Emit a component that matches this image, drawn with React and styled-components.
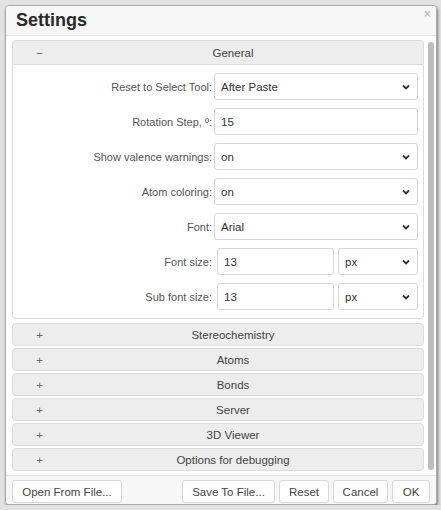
import React from "react";
import styled, { createGlobalStyle } from "styled-components";

const Global = createGlobalStyle`
  html, body {
    margin: 0;
    padding: 0;
    background: #e2e2e2;
    font-family: "Liberation Sans", Arial, sans-serif;
  }
`;

const Dialog = styled.div`
  box-sizing: border-box;
  margin: 5px 0 0 5px;
  width: 432px;
  height: 500px;
  background: #fff;
  border: 1px solid #a9a9a9;
  border-radius: 4px;
  box-shadow: 1px 2px 3px rgba(0, 0, 0, 0.45);
  display: flex;
  flex-direction: column;
  overflow: hidden;
`;

const TitleBar = styled.div`
  position: relative;
  height: 29px;
  flex: none;
  display: flex;
  align-items: center;
  padding-left: 10px;
  background: #f7f7f7;
  border-bottom: 1px solid #e3e3e3;
  font-size: 18px;
  font-weight: bold;
  color: #2a2a2a;
`;

const Close = styled.span`
  position: absolute;
  right: 5px;
  top: 1px;
  font-size: 12px;
  font-weight: bold;
  color: #c4c4c4;
`;

const Body = styled.div`
  flex: 1;
  display: flex;
  gap: 4px;
  padding: 4px 2px 0 6px;
  overflow: hidden;
`;

const Panels = styled.div`
  width: 412px;
  display: flex;
  flex-direction: column;
`;

const Scrollbar = styled.div`
  width: 6px;
  height: 428px;
  margin-top: 2px;
  border-radius: 3px;
  background: #bdbdbd;
`;

const Header = styled.div`
  box-sizing: border-box;
  height: ${(p) => (p.open ? 25 : 23)}px;
  margin-top: ${(p) => (p.open ? 0 : 2)}px;
  display: grid;
  grid-template-columns: 30px 1fr;
  align-items: center;
  background: #ededed;
  border: 1px solid #dcdcdc;
  border-radius: ${(p) => (p.open ? "4px 4px 0 0" : "4px")};
  font-size: 11.5px;
  color: #444;
`;

const Sign = styled.span`
  text-align: right;
  color: #666;
`;

const HeaderText = styled.span`
  text-align: center;
`;

const PanelBody = styled.div`
  box-sizing: border-box;
  height: 254px;
  margin-bottom: 2px;
  padding: 8px 5px 0 0;
  border: 1px solid #dcdcdc;
  border-top: none;
  border-radius: 0 0 4px 4px;
  display: flex;
  flex-direction: column;
  gap: 8px;
`;

const Row = styled.div`
  display: grid;
  grid-template-columns: 201px 1fr;
  align-items: center;
  height: 27px;
`;

const Label = styled.label`
  text-align: right;
  padding-right: 2px;
  font-size: 11px;
  color: #555;
`;

const Controls = styled.div`
  display: flex;
  gap: 4px;
  height: 100%;
`;

const Field = styled.div`
  position: relative;
  box-sizing: border-box;
  flex: ${(p) => p.flex || 1};
  height: 27px;
  margin-left: ${(p) => p.shift || 0}px;
  border: 1px solid #d6d6d6;
  border-radius: 3px;
  background: #fff;
  display: flex;
  align-items: center;
  padding-left: 6px;
  font-size: 11.5px;
  color: #333;
`;

const Chevron = styled.svg`
  position: absolute;
  right: 7px;
  top: 50%;
  margin-top: -3px;
  width: 8px;
  height: 6px;
`;

const Footer = styled.div`
  flex: none;
  height: 29px;
  display: flex;
  gap: 4px;
  padding: 4px 5px 0 6px;
  box-sizing: border-box;
  background: #f7f7f7;
  border-top: 1px solid #e3e3e3;
`;

const Button = styled.button`
  box-sizing: border-box;
  height: 23px;
  width: ${(p) => p.w}px;
  margin-left: ${(p) => p.push || 0}px;
  padding: 0;
  background: #fff;
  border: 1px solid #d8d8d8;
  border-radius: 3px;
  font-family: "Liberation Sans", Arial, sans-serif;
  font-size: 11.5px;
  color: #444;
`;

const Select = ({ value, flex, shift }) => (
  <Field flex={flex} shift={shift}>
    {value}
    <Chevron viewBox="0 0 8 6">
      <path d="M1 1.5 L4 4.5 L7 1.5" fill="none" stroke="#333" strokeWidth="1.8" />
    </Chevron>
  </Field>
);

const Input = ({ value, flex, shift }) => (
  <Field flex={flex} shift={shift}>
    {value}
  </Field>
);

const collapsed = [
  "Stereochemistry",
  "Atoms",
  "Bonds",
  "Server",
  "3D Viewer",
  "Options for debugging",
];

export default function App() {
  return (
    <>
      <Global />
      <Dialog>
        <TitleBar>
          Settings
          <Close>×</Close>
        </TitleBar>
        <Body>
          <Panels>
            <Header open>
              <Sign>−</Sign>
              <HeaderText>General</HeaderText>
            </Header>
            <PanelBody>
              <Row>
                <Label>Reset to Select Tool:</Label>
                <Controls>
                  <Select value="After Paste" />
                </Controls>
              </Row>
              <Row>
                <Label>Rotation Step, º:</Label>
                <Controls>
                  <Input value="15" />
                </Controls>
              </Row>
              <Row>
                <Label>Show valence warnings:</Label>
                <Controls>
                  <Select value="on" />
                </Controls>
              </Row>
              <Row>
                <Label>Atom coloring:</Label>
                <Controls>
                  <Select value="on" />
                </Controls>
              </Row>
              <Row>
                <Label>Font:</Label>
                <Controls>
                  <Select value="Arial" />
                </Controls>
              </Row>
              <Row>
                <Label>Font size:</Label>
                <Controls>
                  <Input value="13" flex="0 0 117px" shift={3} />
                  <Select value="px" />
                </Controls>
              </Row>
              <Row>
                <Label>Sub font size:</Label>
                <Controls>
                  <Input value="13" flex="0 0 117px" shift={3} />
                  <Select value="px" />
                </Controls>
              </Row>
            </PanelBody>
            {collapsed.map((name) => (
              <Header key={name}>
                <Sign>+</Sign>
                <HeaderText>{name}</HeaderText>
              </Header>
            ))}
          </Panels>
          <Scrollbar />
        </Body>
        <Footer>
          <Button w={110}>Open From File...</Button>
          <Button w={93} push={56}>Save To File...</Button>
          <Button w={50}>Reset</Button>
          <Button w={55}>Cancel</Button>
          <Button w={38}>OK</Button>
        </Footer>
      </Dialog>
    </>
  );
}
